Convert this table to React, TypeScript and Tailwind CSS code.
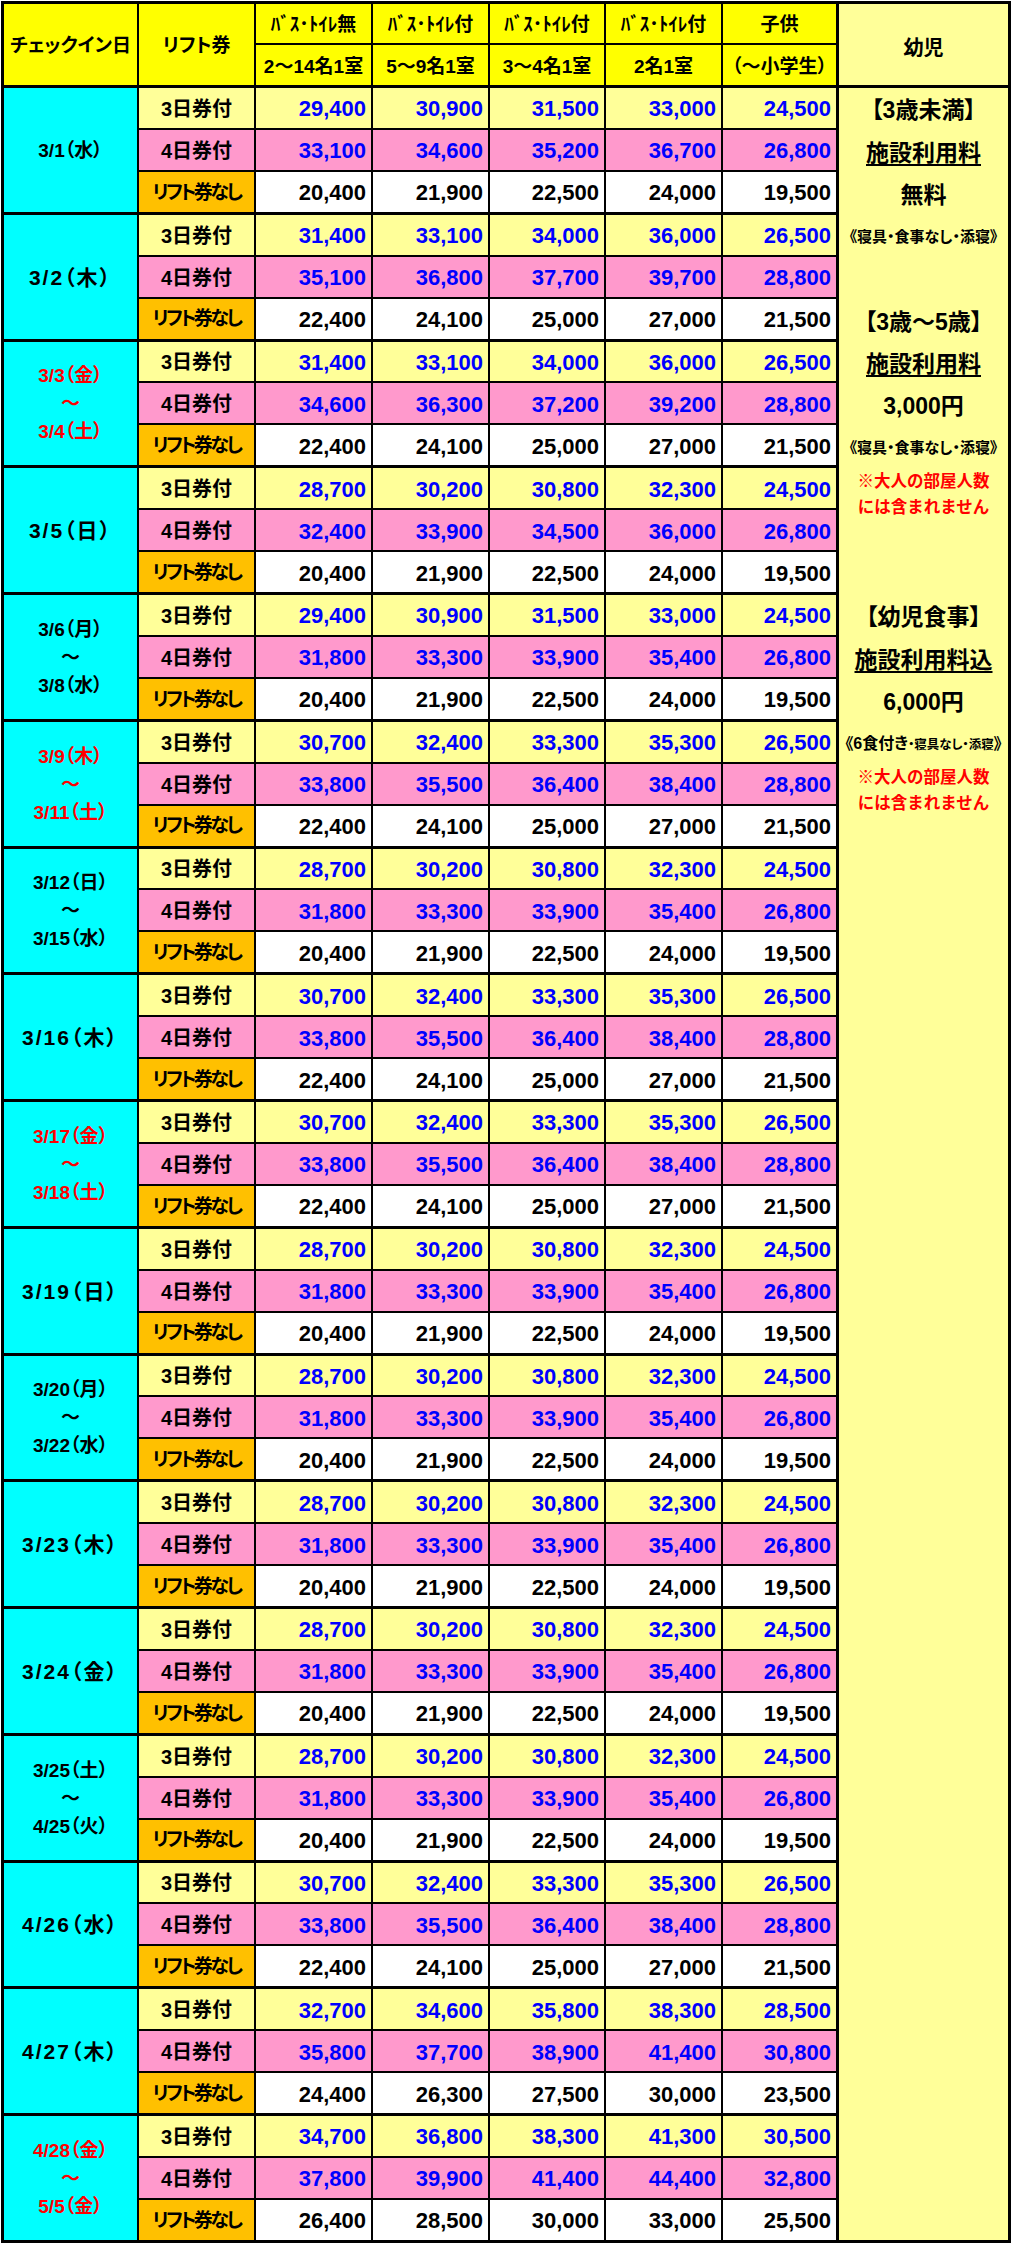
import React from 'react';

type Group = { date: string[]; red?: boolean; wide?: boolean; prices: string[][] };

const P1 = [
  ['29,400', '30,900', '31,500', '33,000', '24,500'],
  ['33,100', '34,600', '35,200', '36,700', '26,800'],
  ['20,400', '21,900', '22,500', '24,000', '19,500'],
];
const P2 = [
  ['31,400', '33,100', '34,000', '36,000', '26,500'],
  ['35,100', '36,800', '37,700', '39,700', '28,800'],
  ['22,400', '24,100', '25,000', '27,000', '21,500'],
];
const P3 = [
  ['31,400', '33,100', '34,000', '36,000', '26,500'],
  ['34,600', '36,300', '37,200', '39,200', '28,800'],
  ['22,400', '24,100', '25,000', '27,000', '21,500'],
];
const P5 = [
  ['28,700', '30,200', '30,800', '32,300', '24,500'],
  ['32,400', '33,900', '34,500', '36,000', '26,800'],
  ['20,400', '21,900', '22,500', '24,000', '19,500'],
];
const P6 = [
  ['29,400', '30,900', '31,500', '33,000', '24,500'],
  ['31,800', '33,300', '33,900', '35,400', '26,800'],
  ['20,400', '21,900', '22,500', '24,000', '19,500'],
];
const PA = [
  ['30,700', '32,400', '33,300', '35,300', '26,500'],
  ['33,800', '35,500', '36,400', '38,400', '28,800'],
  ['22,400', '24,100', '25,000', '27,000', '21,500'],
];
const PB = [
  ['28,700', '30,200', '30,800', '32,300', '24,500'],
  ['31,800', '33,300', '33,900', '35,400', '26,800'],
  ['20,400', '21,900', '22,500', '24,000', '19,500'],
];
const P427 = [
  ['32,700', '34,600', '35,800', '38,300', '28,500'],
  ['35,800', '37,700', '38,900', '41,400', '30,800'],
  ['24,400', '26,300', '27,500', '30,000', '23,500'],
];
const P428 = [
  ['34,700', '36,800', '38,300', '41,300', '30,500'],
  ['37,800', '39,900', '41,400', '44,400', '32,800'],
  ['26,400', '28,500', '30,000', '33,000', '25,500'],
];

const groups: Group[] = [
  { date: ['3/1（水）'], prices: P1 },
  { date: ['3/2（木）'], wide: true, prices: P2 },
  { date: ['3/3（金）', '〜', '3/4（土）'], red: true, prices: P3 },
  { date: ['3/5（日）'], wide: true, prices: P5 },
  { date: ['3/6（月）', '〜', '3/8（水）'], prices: P6 },
  { date: ['3/9（木）', '〜', '3/11（土）'], red: true, prices: PA },
  { date: ['3/12（日）', '〜', '3/15（水）'], prices: PB },
  { date: ['3/16（木）'], wide: true, prices: PA },
  { date: ['3/17（金）', '〜', '3/18（土）'], red: true, prices: PA },
  { date: ['3/19（日）'], wide: true, prices: PB },
  { date: ['3/20（月）', '〜', '3/22（水）'], prices: PB },
  { date: ['3/23（木）'], wide: true, prices: PB },
  { date: ['3/24（金）'], wide: true, prices: PB },
  { date: ['3/25（土）', '〜', '4/25（火）'], prices: PB },
  { date: ['4/26（水）'], wide: true, prices: PA },
  { date: ['4/27（木）'], wide: true, prices: P427 },
  { date: ['4/28（金）', '〜', '5/5（金）'], red: true, prices: P428 },
];

const colW = ['w-[117px]', 'w-[117px]', 'w-[116px]', 'w-[117px]', 'w-[115px]'];
const rowKinds = [
  { label: '3日券付', labelCls: 'bg-[#ffff99] text-[20px]', bg: 'bg-[#ffff99]', text: 'text-[#0000ff]' },
  { label: '4日券付', labelCls: 'bg-[#ff99cc] text-[20px]', bg: 'bg-[#ff99cc]', text: 'text-[#0000ff]' },
  {
    label: 'リフト券なし',
    labelCls: 'bg-[#ffc000] text-[19px] tracking-[-2.5px]',
    bg: 'bg-white',
    text: 'text-black',
  },
];
const headTop = ['ﾊﾞｽ･ﾄｲﾚ無', 'ﾊﾞｽ･ﾄｲﾚ付', 'ﾊﾞｽ･ﾄｲﾚ付', 'ﾊﾞｽ･ﾄｲﾚ付', '子供'];
const headBottom = ['2〜14名1室', '5〜9名1室', '3〜4名1室', '2名1室', '（〜小学生）'];

const palt = "[font-feature-settings:'palt']";

function PriceGroup({ g }: { g: Group }) {
  return (
    <div className="flex h-[126.75px] border-t-[3px] border-black">
      <div
        className={`w-[133px] bg-[#00ffff] flex flex-col items-center justify-center pt-[2px] leading-[28px] ${palt} ${
          g.wide ? 'text-[21px] tracking-[2px]' : 'text-[19px]'
        } ${g.red ? 'text-[#ff0000]' : 'text-black'}`}
      >
        {g.date.map((d, i) => (
          <div key={i}>{d}</div>
        ))}
      </div>
      <div className="flex-1 flex flex-col">
        {rowKinds.map((k, r) => (
          <div key={r} className={`flex flex-1 ${r > 0 ? 'border-t-2 border-black' : ''}`}>
            <div
              className={`w-[117px] border-l-2 border-black flex items-center justify-center pt-[2px] whitespace-nowrap ${palt} ${k.labelCls}`}
            >
              {k.label}
            </div>
            {g.prices[r].map((p, i) => (
              <div
                key={i}
                className={`${colW[i]} border-l-2 border-black flex items-center justify-end pr-[5px] pt-[2px] text-[22px] ${k.bg} ${k.text}`}
              >
                {p}
              </div>
            ))}
          </div>
        ))}
      </div>
    </div>
  );
}

function Slot({ children, top }: { children?: React.ReactNode; top?: boolean }) {
  return (
    <div
      className={`h-[42.25px] flex justify-center ${top ? 'items-start' : 'items-center pt-[3px]'} whitespace-nowrap`}
    >
      {children}
    </div>
  );
}

function RedNote() {
  return (
    <div className="text-[16.5px] leading-[26px] text-[#ff0000] text-center">
      <div>※大人の部屋人数</div>
      <div>には含まれません</div>
    </div>
  );
}

function InfantColumn() {
  const big = `text-[23px] ${palt}`;
  const under = `${big} underline decoration-2 underline-offset-[3px]`;
  const small = `text-[15px] ${palt}`;
  return (
    <div className="w-[172px] border-l-[3px] border-black bg-[#ffff99] flex flex-col">
      <div className="h-[81px] flex items-center justify-center pt-[6px] text-[20px]">幼児</div>
      <div className="flex-1 border-t-[3px] border-black flex flex-col">
        <Slot><span className={big}>【3歳未満】</span></Slot>
        <Slot><span className={under}>施設利用料</span></Slot>
        <Slot><span className={big}>無料</span></Slot>
        <Slot><span className={small}>《寝具・食事なし・添寝》</span></Slot>
        <Slot />
        <Slot><span className={big}>【3歳〜5歳】</span></Slot>
        <Slot><span className={under}>施設利用料</span></Slot>
        <Slot><span className={big}>3,000円</span></Slot>
        <Slot><span className={small}>《寝具・食事なし・添寝》</span></Slot>
        <Slot top><RedNote /></Slot>
        <Slot />
        <Slot />
        <Slot><span className={big}>【幼児食事】</span></Slot>
        <Slot><span className={under}>施設利用料込</span></Slot>
        <Slot><span className={big}>6,000円</span></Slot>
        <Slot>
          <span className={palt}>
            <span className="text-[16px]">《6食付き</span>
            <span className="text-[12.5px]">・寝具なし・添寝</span>
            <span className="text-[16px]">》</span>
          </span>
        </Slot>
        <Slot top><RedNote /></Slot>
      </div>
    </div>
  );
}

export default function App() {
  return (
    <div className="bg-white">
      <div className="ml-[1px] mt-[1px] w-[1010px] border-[3px] border-black flex font-['Liberation_Sans','Noto_Sans_CJK_JP',sans-serif] font-bold text-black">
        <div className="w-[832px] flex flex-col">
          <div className="h-[81px] flex bg-[#ffff00] text-[19px]">
            <div className={`w-[133px] flex items-center justify-center pt-[4px] ${palt}`}>チェックイン日</div>
            <div className={`w-[117px] border-l-2 border-black flex items-center justify-center pt-[4px] ${palt}`}>
              リフト券
            </div>
            {headTop.map((h, i) => (
              <div key={i} className={`${colW[i]} border-l-2 border-black flex flex-col`}>
                <div className="h-[39px] flex items-center justify-center pt-[4px] whitespace-nowrap">{h}</div>
                <div className={`flex-1 border-t-2 border-black flex items-center justify-center pt-[4px] whitespace-nowrap ${palt}`}>
                  {headBottom[i]}
                </div>
              </div>
            ))}
          </div>
          {groups.map((g, i) => (
            <PriceGroup key={i} g={g} />
          ))}
        </div>
        <InfantColumn />
      </div>
    </div>
  );
}
